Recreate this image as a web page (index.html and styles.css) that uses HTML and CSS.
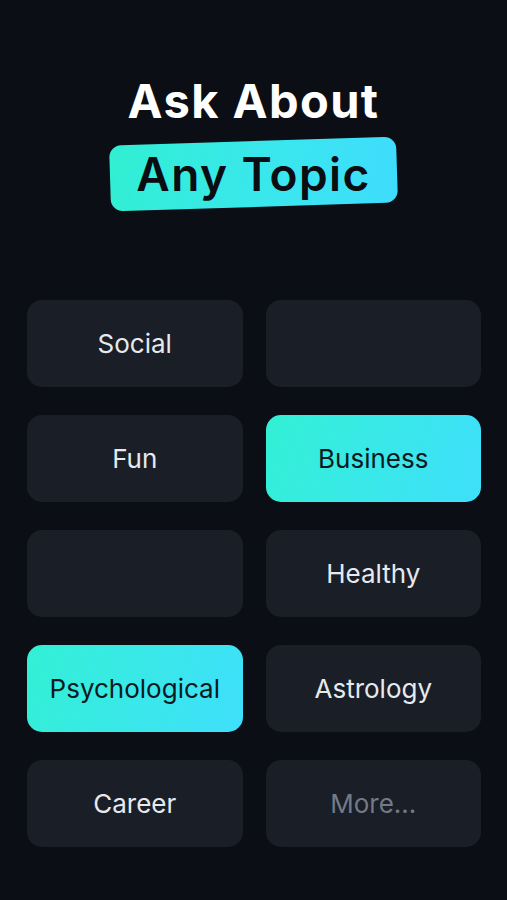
FILE: index.html
```html
<!DOCTYPE html>
<html lang="en">
<head>
<meta charset="utf-8">
<title>Ask About Any Topic</title>
<link rel="stylesheet" href="styles.css">
</head>
<body>
<main class="screen">
  <header class="hero">
    <h1 class="hero-line">Ask About</h1>
    <div class="hero-pill"><span class="hero-pill-text">Any Topic</span></div>
  </header>
  <section class="topics">
    <div class="tile">Social</div>
    <div class="tile"></div>
    <div class="tile">Fun</div>
    <div class="tile tile-active">Business</div>
    <div class="tile"></div>
    <div class="tile">Healthy</div>
    <div class="tile tile-active">Psychological</div>
    <div class="tile">Astrology</div>
    <div class="tile">Career</div>
    <div class="tile tile-muted">More...</div>
  </section>
</main>
</body>
</html>
```

FILE: styles.css
```css
* { box-sizing: border-box; }
html, body {
  margin: 0;
  padding: 0;
  background: #0b0e14;
}
body {
  font-family: Inter, "Noto Sans", sans-serif;
  color: #e8eaee;
}
.screen {
  width: 507px;
  min-height: 900px;
  display: flex;
  flex-direction: column;
}
.hero {
  display: flex;
  flex-direction: column;
  align-items: center;
  padding-top: 72px;
}
.hero-line {
  margin: 0;
  font-size: 47px;
  font-weight: 700;
  line-height: 58px;
  color: #ffffff;
  letter-spacing: 1.4px;
}
.hero-pill {
  position: relative;
  margin-top: 11px;
  width: 287px;
  height: 66px;
  display: flex;
  align-items: center;
  justify-content: center;
}
.hero-pill::before {
  content: "";
  position: absolute;
  inset: 0;
  border-radius: 12px;
  background: linear-gradient(100deg, #31efd2 0%, #3ae6ef 60%, #3fdcfd 100%);
  transform: rotate(-1.8deg);
}
.hero-pill-text {
  position: relative;
  font-size: 46px;
  font-weight: 600;
  color: #0a0d12;
  letter-spacing: 1.4px;
}
.topics {
  margin-top: 93px;
  padding: 0 26px 0 27px;
  display: grid;
  grid-template-columns: 1fr 1fr;
  column-gap: 23px;
  row-gap: 28px;
}
.tile {
  height: 87px;
  border-radius: 15px;
  background: #1a1e26;
  display: flex;
  align-items: center;
  justify-content: center;
  font-size: 26px;
  font-weight: 400;
  color: #e6e9ee;
}
.tile-active {
  background: linear-gradient(110deg, #32f0d4 0%, #39e8e8 50%, #3fdffb 100%);
  color: #0c1a1f;
}
.tile-muted {
  color: #737a86;
}
```
